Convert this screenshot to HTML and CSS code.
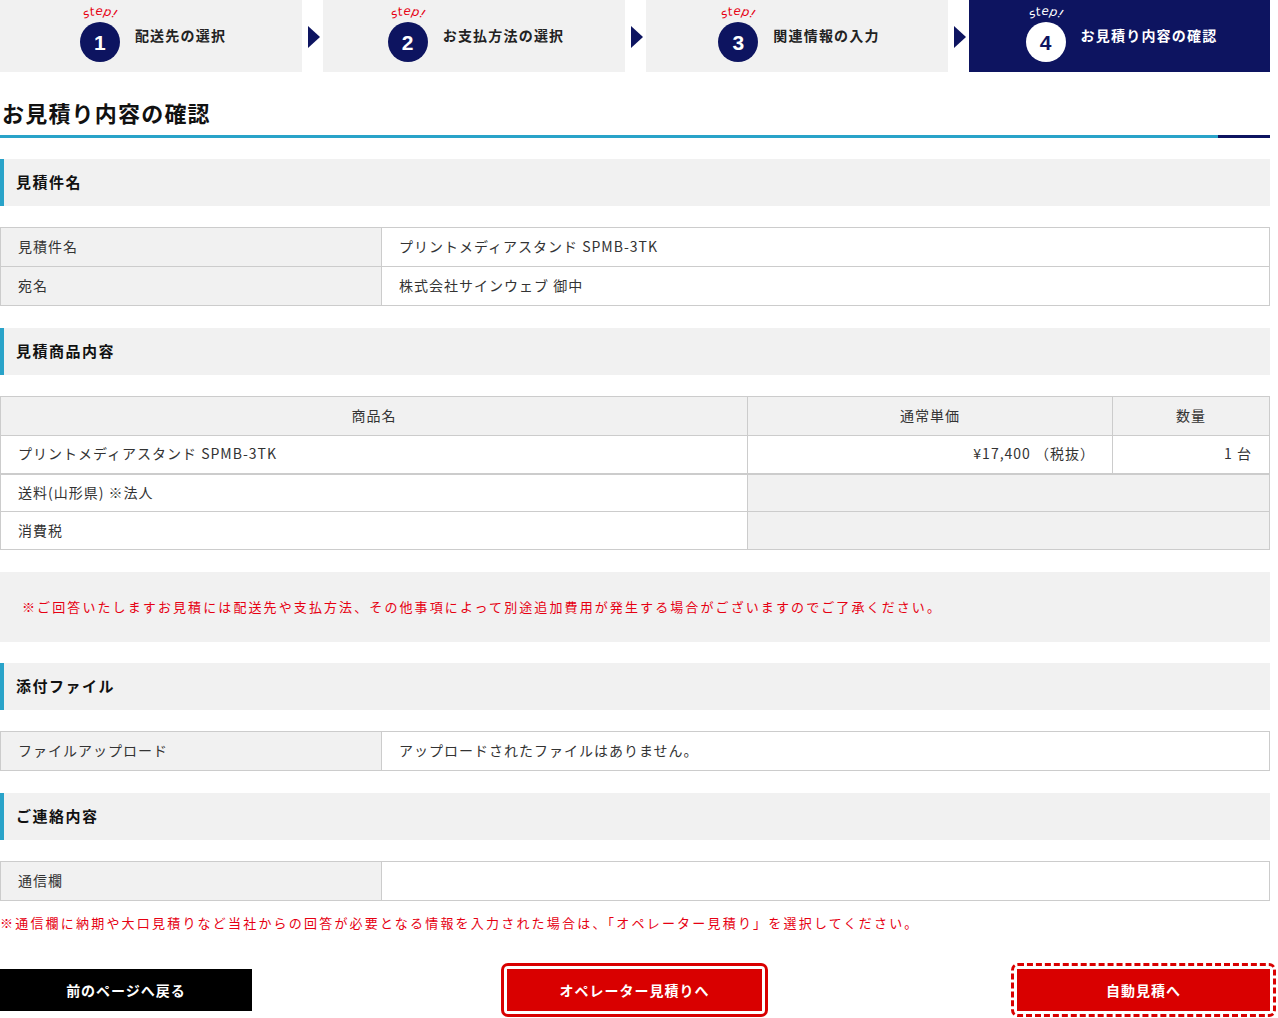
FILE: index.html
```html
<!DOCTYPE html>
<html lang="ja">
<head>
<meta charset="utf-8">
<title>お見積り内容の確認</title>
<link rel="stylesheet" href="styles.css">
</head>
<body>
<div class="page">
  <ol class="steps">
    <li class="step">
      <div class="mark">
        <svg class="step-word" viewBox="0 0 44 16" width="44" height="16"><defs><path id="arc1" d="M1,16 Q22,2 43,16"/></defs><text><textPath href="#arc1" startOffset="50%" text-anchor="middle">step!</textPath></text></svg>
        <span class="num">1</span>
      </div>
      <span class="label">配送先の選択</span>
    </li>
    <li class="arrow"></li>
    <li class="step">
      <div class="mark">
        <svg class="step-word" viewBox="0 0 44 16" width="44" height="16"><defs><path id="arc2" d="M1,16 Q22,2 43,16"/></defs><text><textPath href="#arc2" startOffset="50%" text-anchor="middle">step!</textPath></text></svg>
        <span class="num">2</span>
      </div>
      <span class="label">お支払方法の選択</span>
    </li>
    <li class="arrow"></li>
    <li class="step">
      <div class="mark">
        <svg class="step-word" viewBox="0 0 44 16" width="44" height="16"><defs><path id="arc3" d="M1,16 Q22,2 43,16"/></defs><text><textPath href="#arc3" startOffset="50%" text-anchor="middle">step!</textPath></text></svg>
        <span class="num">3</span>
      </div>
      <span class="label">関連情報の入力</span>
    </li>
    <li class="arrow"></li>
    <li class="step current">
      <div class="mark">
        <svg class="step-word" viewBox="0 0 44 16" width="44" height="16"><defs><path id="arc4" d="M1,16 Q22,2 43,16"/></defs><text><textPath href="#arc4" startOffset="50%" text-anchor="middle">step!</textPath></text></svg>
        <span class="num">4</span>
      </div>
      <span class="label">お見積り内容の確認</span>
    </li>
  </ol>

  <h1 class="title">お見積り内容の確認</h1>
  <div class="rule"></div>

  <h2 class="sec-head">見積件名</h2>
  <table class="tbl">
    <tr><th class="key">見積件名</th><td>プリントメディアスタンド SPMB-3TK</td></tr>
    <tr><th class="key">宛名</th><td>株式会社サインウェブ 御中</td></tr>
  </table>

  <h2 class="sec-head">見積商品内容</h2>
  <table class="tbl items">
    <tr class="head"><th class="c-name">商品名</th><th class="c-price">通常単価</th><th class="c-qty">数量</th></tr>
    <tr><td>プリントメディアスタンド SPMB-3TK</td><td class="num-cell">¥17,400 （税抜）</td><td class="num-cell">1 台</td></tr>
    <tr class="sep"><td>送料(山形県) ※法人</td><td class="blank" colspan="2"></td></tr>
    <tr><td>消費税</td><td class="blank" colspan="2"></td></tr>
  </table>

  <p class="notice">※ご回答いたしますお見積には配送先や支払方法、その他事項によって別途追加費用が発生する場合がございますのでご了承ください。</p>

  <h2 class="sec-head">添付ファイル</h2>
  <table class="tbl">
    <tr><th class="key">ファイルアップロード</th><td>アップロードされたファイルはありません。</td></tr>
  </table>

  <h2 class="sec-head">ご連絡内容</h2>
  <table class="tbl last">
    <tr><th class="key">通信欄</th><td></td></tr>
  </table>

  <p class="foot-note">※通信欄に納期や大口見積りなど当社からの回答が必要となる情報を入力された場合は、「オペレーター見積り」を選択してください。</p>

  <div class="actions">
    <a class="btn back">前のページへ戻る</a>
    <a class="btn red op">オペレーター見積りへ</a>
    <a class="btn red auto">自動見積へ</a>
  </div>
</div>
</body>
</html>
```

FILE: styles.css
```css
* {
  box-sizing: border-box;
  margin: 0;
  padding: 0;
}

body {
  margin: 0;
  background: #fff;
  font-family: "Noto Sans CJK JP", "Noto Sans", sans-serif;
  color: #333;
}

.page {
  width: 1270px;
  padding-bottom: 6px;
}

/* steps */
.steps {
  display: flex;
  list-style: none;
  height: 72px;
}

.step {
  flex: 0 0 302px;
  background: #f1f1f1;
  display: flex;
  align-items: flex-start;
  justify-content: center;
  gap: 15px;
  padding-top: 6px;
  padding-left: 4px;
}

.step.current {
  flex-basis: 301px;
  background: #0d1460;
}

.arrow {
  flex: 0 0 21px;
  display: flex;
  align-items: center;
  justify-content: center;
}

.arrow::before {
  content: "";
  display: block;
  margin-left: 3px;
  margin-top: 2px;
  border-left: 12px solid #0d1460;
  border-top: 11px solid transparent;
  border-bottom: 11px solid transparent;
}

.mark {
  display: flex;
  flex-direction: column;
  align-items: center;
  width: 40px;
}

.step-word {
  display: block;
  width: 44px;
  height: 16px;
  overflow: visible;
  fill: #e60012;
  font-family: "DejaVu Sans", sans-serif;
  font-size: 12px;
  font-style: italic;
  letter-spacing: 0.3px;
}

.current .step-word {
  fill: #fff;
}

.num {
  display: block;
  width: 40px;
  height: 40px;
  border-radius: 50%;
  background: #0d1460;
  color: #fff;
  font-family: "Liberation Sans", Arial, sans-serif;
  font-weight: bold;
  font-size: 21px;
  line-height: 42px;
  text-align: center;
}

.current .num {
  background: #fff;
  color: #0d1460;
}

.label {
  align-self: center;
  margin-top: -8px;
  font-size: 14px;
  font-weight: bold;
  letter-spacing: 1.2px;
  color: #222;
}

.current .label {
  color: #fff;
}

/* title */
.title {
  margin-top: 24px;
  padding-left: 2px;
  padding-bottom: 7px;
  font-size: 22px;
  line-height: 32px;
  font-weight: bold;
  letter-spacing: 1.2px;
  color: #111;
}

.rule {
  height: 3px;
  background: linear-gradient(to right, #29a3c9 1218px, #0d1460 1218px);
  margin-bottom: 21px;
}

/* section headings */
.sec-head {
  height: 47px;
  background: #f1f1f1;
  border-left: 4px solid #29a3c9;
  padding-left: 12px;
  padding-bottom: 3px;
  display: flex;
  align-items: center;
  font-size: 15px;
  font-weight: bold;
  letter-spacing: 1.5px;
  color: #111;
  margin-bottom: 21px;
}

/* tables */
.tbl {
  width: 1270px;
  border-collapse: collapse;
  margin-bottom: 22px;
  font-size: 14px;
  letter-spacing: 1px;
  color: #333;
}

.tbl th,
.tbl td {
  border: 1px solid #ccc;
  height: 39px;
  padding: 0 17px 2px;
  font-weight: normal;
  text-align: left;
  vertical-align: middle;
}

.tbl th {
  background: #f1f1f1;
}

.tbl .key {
  width: 381px;
}

.items td {
  height: 38px;
}

.items .head th {
  text-align: center;
}

.items .c-name {
  width: 747px;
}

.items .c-price {
  width: 365px;
}

.items .num-cell {
  text-align: right;
}

.items .sep td {
  border-top: 2px solid #ccc;
}

.items .blank {
  background: #f1f1f1;
}

.tbl.last {
  margin-bottom: 0;
}

/* notices */
.notice {
  height: 70px;
  background: #f1f1f1;
  display: flex;
  align-items: center;
  padding-left: 22px;
  padding-bottom: 2px;
  color: #e60012;
  font-size: 13px;
  letter-spacing: 2.1px;
  margin-bottom: 21px;
}

.foot-note {
  margin-top: 13px;
  font-size: 13px;
  line-height: 18px;
  letter-spacing: 2.2px;
  color: #e60012;
}

/* buttons */
.actions {
  display: flex;
  justify-content: space-between;
  margin-top: 37px;
}

.btn {
  position: relative;
  width: 252px;
  height: 42px;
  display: flex;
  align-items: center;
  justify-content: center;
  background: #000;
  color: #fff;
  font-size: 14px;
  font-weight: bold;
  letter-spacing: 1px;
  text-decoration: none;
}

.btn.red {
  background: #d90000;
}

.btn.op {
  width: 255px;
}

.btn.auto {
  width: 253px;
}

.btn.op::before,
.btn.auto::before {
  content: "";
  position: absolute;
  inset: -6px;
  border: 3px solid #d90000;
  border-radius: 7px;
}

.btn.auto::before {
  border-style: dashed;
}
```
